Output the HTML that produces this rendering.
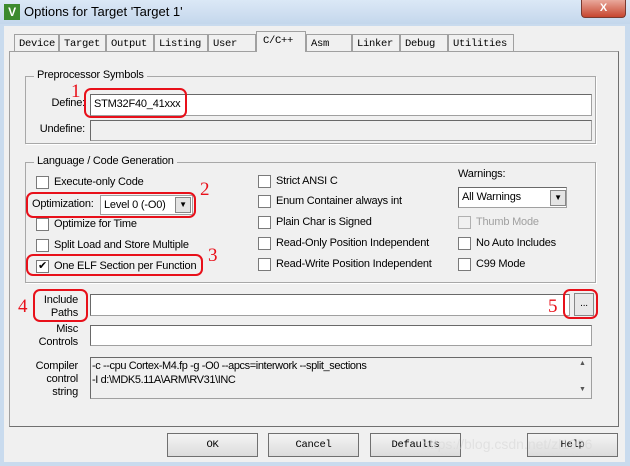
<!DOCTYPE html>
<html><head><style>
*{margin:0;padding:0;box-sizing:border-box}
body{width:630px;height:466px;position:relative;overflow:hidden;background:#c9dbee;font-family:"Liberation Sans",sans-serif;font-size:11px;letter-spacing:-0.2px;color:#000}
.a{position:absolute}
.tab{position:absolute;top:34px;height:17px;border:1px solid #a0a0a0;border-bottom:none;background:#f0f0f0;padding:3px 0 0 4px;font-family:"Liberation Mono",monospace;font-size:10.5px;letter-spacing:-0.3px}
.grp{position:absolute;border:1px solid #a8a8a8;box-shadow:1px 1px 0 #fff}
.grp span{position:absolute;top:-8px;left:8px;background:#f0f0f0;padding:0 3px}
.fld{position:absolute;background:#fff;border:1px solid #a0a0a0;border-top-color:#696969;border-left-color:#696969}
.dis{background:#f0f0f0}
.cb{position:absolute;width:13px;height:13px;border:1px solid #7a7a7a;background:#fff}
.lbl{position:absolute;white-space:nowrap}
.btn{position:absolute;top:433px;height:24px;width:91px;border:1px solid #707070;background:linear-gradient(#f4f4f4,#dcdcdc);text-align:center;line-height:22px;font-family:"Liberation Mono",monospace;font-size:10.5px;letter-spacing:-0.3px}
.red{position:absolute;border:2px solid #e8101a;border-radius:7px}
.num{position:absolute;color:#e8101a;font-family:"Liberation Serif",serif;font-size:19px}
.r{text-align:right}
</style></head><body>
<div class="a" style="left:0;top:0;width:630px;height:24px;background:linear-gradient(#dbe8f6,#c4d7ec)"></div>
<div class="a" style="left:4px;top:4px;width:16px;height:16px;background:#3d8a2e;color:#fff;font-size:12px;font-weight:bold;text-align:center;line-height:16px">V</div>
<div class="lbl" style="left:24px;top:4px;font-size:13px;letter-spacing:0">Options for Target 'Target 1'</div>
<div class="a" style="left:581px;top:0;width:45px;height:18px;background:linear-gradient(#e9a99c,#c7462f);border:1px solid #7a3a30;border-top:none;border-radius:0 0 4px 4px;color:#fff;text-align:center;font-weight:bold;line-height:16px">X</div>
<div class="a" style="left:4px;top:26px;width:621px;height:436px;background:#f0f0f0"></div>
<div class="tab" style="left:14px;width:45px">Device</div>
<div class="tab" style="left:59px;width:47px">Target</div>
<div class="tab" style="left:106px;width:48px">Output</div>
<div class="tab" style="left:154px;width:54px">Listing</div>
<div class="tab" style="left:208px;width:48px">User</div>
<div class="tab" style="left:306px;width:46px">Asm</div>
<div class="tab" style="left:352px;width:48px">Linker</div>
<div class="tab" style="left:400px;width:48px">Debug</div>
<div class="tab" style="left:448px;width:66px">Utilities</div>
<div class="a" style="left:9px;top:51px;width:610px;height:376px;border:1px solid #a0a0a0;border-right-color:#707070;border-bottom-color:#707070"></div>
<div class="tab" style="left:256px;top:31px;height:21px;width:50px;border-bottom:none;z-index:2;padding-left:6px">C/C++</div>

<div class="grp" style="left:25px;top:76px;width:571px;height:68px"><span>Preprocessor Symbols</span></div>
<div class="lbl r" style="left:40px;top:97px;width:45px">Define:</div>
<div class="fld" style="left:90px;top:94px;width:502px;height:22px;padding:3px 3px">STM32F40_41xxx</div>
<div class="lbl r" style="left:20px;top:123px;width:65px">Undefine:</div>
<div class="fld dis" style="left:90px;top:120px;width:502px;height:21px"></div>

<div class="grp" style="left:25px;top:162px;width:571px;height:121px"><span>Language / Code Generation</span></div>
<div class="cb" style="left:36px;top:176px"></div><div class="lbl" style="left:54px;top:176px">Execute-only Code</div>
<div class="lbl" style="left:32px;top:198px">Optimization:</div>
<div class="fld" style="left:100px;top:195px;width:93px;height:20px;padding:3px 3px;border-color:#a0a0a0">Level 0 (-O0)</div>
<div class="a" style="left:175px;top:197px;width:16px;height:16px;background:#e4e4e4;border:1px solid #888;font-size:8px;text-align:center;line-height:14px">▼</div>
<div class="cb" style="left:36px;top:218px"></div><div class="lbl" style="left:54px;top:218px">Optimize for Time</div>
<div class="cb" style="left:36px;top:239px"></div><div class="lbl" style="left:54px;top:239px">Split Load and Store Multiple</div>
<div class="cb" style="left:36px;top:260px;font-size:11px;line-height:11px;text-align:center">✔</div><div class="lbl" style="left:54px;top:260px">One ELF Section per Function</div>

<div class="cb" style="left:258px;top:175px"></div><div class="lbl" style="left:276px;top:175px">Strict ANSI C</div>
<div class="cb" style="left:258px;top:195px"></div><div class="lbl" style="left:276px;top:195px">Enum Container always int</div>
<div class="cb" style="left:258px;top:216px"></div><div class="lbl" style="left:276px;top:216px">Plain Char is Signed</div>
<div class="cb" style="left:258px;top:237px"></div><div class="lbl" style="left:276px;top:237px">Read-Only Position Independent</div>
<div class="cb" style="left:258px;top:258px"></div><div class="lbl" style="left:276px;top:258px">Read-Write Position Independent</div>
<div class="lbl" style="left:458px;top:168px">Warnings:</div>
<div class="fld" style="left:458px;top:187px;width:109px;height:21px;padding:3px 3px">All Warnings</div>
<div class="a" style="left:550px;top:190px;width:16px;height:16px;background:#e4e4e4;border:1px solid #888;font-size:8px;text-align:center;line-height:14px">▼</div>
<div class="cb" style="left:458px;top:216px;background:#f0f0f0;border-color:#b0b0b0"></div><div class="lbl" style="left:476px;top:216px;color:#a0a0a0">Thumb Mode</div>
<div class="cb" style="left:458px;top:237px"></div><div class="lbl" style="left:476px;top:237px">No Auto Includes</div>
<div class="cb" style="left:458px;top:258px"></div><div class="lbl" style="left:476px;top:258px">C99 Mode</div>

<div class="lbl r" style="left:30px;top:294px;width:48px;line-height:13px">Include<br>Paths</div>
<div class="fld" style="left:90px;top:294px;width:480px;height:22px"></div>
<div class="a" style="left:574px;top:293px;width:20px;height:23px;background:#e8e8e8;border:1px solid #888;text-align:center;line-height:20px;font-size:10px">...</div>
<div class="lbl r" style="left:20px;top:323px;width:58px;line-height:13px">Misc<br>Controls</div>
<div class="fld" style="left:90px;top:325px;width:502px;height:21px"></div>
<div class="lbl r" style="left:20px;top:360px;width:58px;line-height:13px">Compiler<br>control<br>string</div>
<div class="fld dis" style="left:90px;top:357px;width:502px;height:42px;padding:2px 1px;line-height:13.5px;letter-spacing:-0.4px">-c --cpu Cortex-M4.fp -g -O0 --apcs=interwork --split_sections<br>-I d:\MDK5.11A\ARM\RV31\INC</div>
<div class="lbl" style="left:579px;top:360px;font-size:7px;color:#555">▲</div>
<div class="lbl" style="left:579px;top:386px;font-size:7px;color:#555">▼</div>

<div class="btn" style="left:167px">OK</div>
<div class="btn" style="left:268px">Cancel</div>
<div class="btn" style="left:370px">Defaults</div>
<div class="btn" style="left:527px">Help</div>
<div class="lbl" style="left:422px;top:436px;color:rgba(215,215,215,.6);font-size:14px;letter-spacing:0">https://blog.csdn.net/zl1996</div>

<div class="red" style="left:84px;top:88px;width:103px;height:30px"></div><div class="num" style="left:71px;top:81px">1</div>
<div class="red" style="left:26px;top:192px;width:170px;height:26px"></div><div class="num" style="left:200px;top:179px">2</div>
<div class="red" style="left:26px;top:254px;width:177px;height:22px"></div><div class="num" style="left:208px;top:245px">3</div>
<div class="red" style="left:33px;top:289px;width:55px;height:33px"></div><div class="num" style="left:18px;top:296px">4</div>
<div class="red" style="left:563px;top:289px;width:35px;height:30px"></div><div class="num" style="left:548px;top:296px">5</div>
</body></html>
